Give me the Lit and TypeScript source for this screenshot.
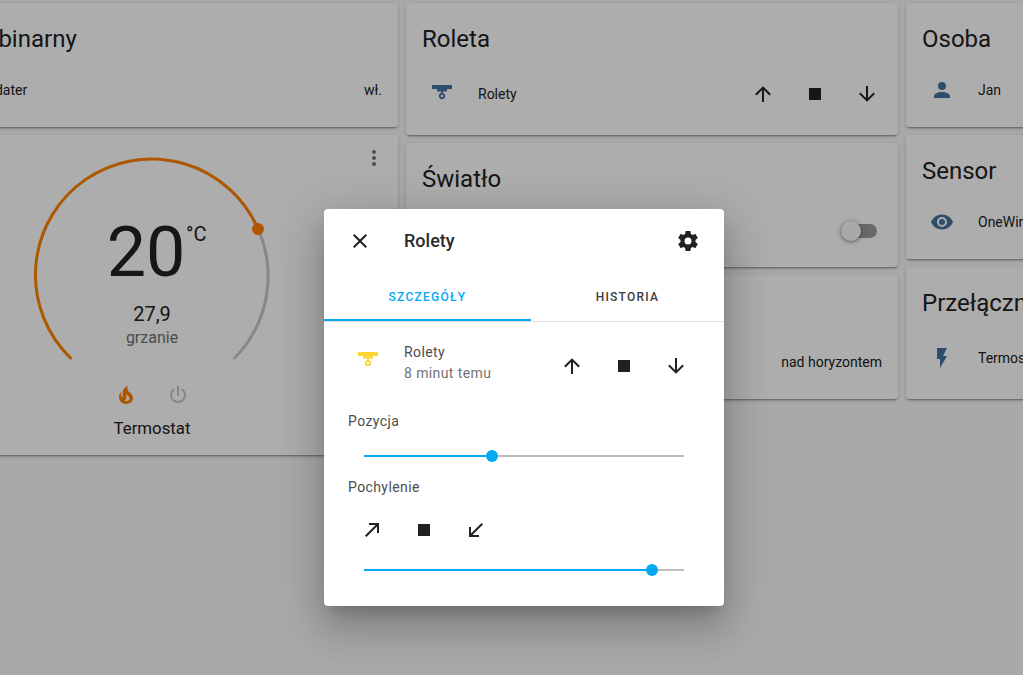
import { LitElement, html, css, svg } from 'lit';
import { customElement } from 'lit/decorators.js';

const ICONS = {
  up: 'M13,20H11V8L5.5,13.5L4.08,12.08L12,4.16L19.92,12.08L18.5,13.5L13,8V20Z',
  down: 'M11,4H13V16L18.5,10.5L19.92,11.92L12,19.84L4.08,11.92L5.5,10.5L11,16V4Z',
  stop: 'M18,18H6V6H18V18Z',
  tiltOpen: 'M5,17.59L15.59,7H9V5H19V15H17V8.41L6.41,19L5,17.59Z',
  tiltClose: 'M19,6.41L17.59,5L7,15.59V9H5V19H15V17H8.41L19,6.41Z',
  close: 'M19,6.41L17.59,5L12,10.59L6.41,5L5,6.41L10.59,12L5,17.59L6.41,19L12,13.41L17.59,19L19,17.59L13.41,12L19,6.41Z',
  cog: 'M12,15.5A3.5,3.5 0 0,1 8.5,12A3.5,3.5 0 0,1 12,8.5A3.5,3.5 0 0,1 15.5,12A3.5,3.5 0 0,1 12,15.5M19.43,12.97C19.47,12.65 19.5,12.33 19.5,12C19.5,11.67 19.47,11.34 19.43,11L21.54,9.37C21.73,9.22 21.78,8.95 21.66,8.73L19.66,5.27C19.54,5.05 19.27,4.96 19.05,5.05L16.56,6.05C16.04,5.66 15.5,5.32 14.87,5.07L14.5,2.42C14.46,2.18 14.25,2 14,2H10C9.75,2 9.54,2.18 9.5,2.42L9.13,5.07C8.5,5.32 7.96,5.66 7.44,6.05L4.95,5.05C4.73,4.96 4.46,5.05 4.34,5.27L2.34,8.73C2.21,8.95 2.27,9.22 2.46,9.37L4.57,11C4.53,11.34 4.5,11.67 4.5,12C4.5,12.33 4.53,12.65 4.57,12.97L2.46,14.63C2.27,14.78 2.21,15.05 2.34,15.27L4.34,18.73C4.46,18.95 4.73,19.03 4.95,18.95L7.44,17.94C7.96,18.34 8.5,18.68 9.13,18.93L9.5,21.58C9.54,21.82 9.75,22 10,22H14C14.25,22 14.46,21.82 14.5,21.58L14.87,18.93C15.5,18.67 16.04,18.34 16.56,17.94L19.05,18.95C19.27,19.03 19.54,18.95 19.66,18.73L21.66,15.27C21.78,15.05 21.73,14.78 21.54,14.63L19.43,12.97Z',
  account: 'M12,4A4,4 0 0,1 16,8A4,4 0 0,1 12,12A4,4 0 0,1 8,8A4,4 0 0,1 12,4M12,14C16.42,14 20,15.79 20,18V20H4V18C4,15.79 7.58,14 12,14Z',
  eye: 'M12,9A3,3 0 0,0 9,12A3,3 0 0,0 12,15A3,3 0 0,0 15,12A3,3 0 0,0 12,9M12,17A5,5 0 0,1 7,12A5,5 0 0,1 12,7A5,5 0 0,1 17,12A5,5 0 0,1 12,17M12,4.5C7,4.5 2.73,7.61 1,12C2.73,16.39 7,19.5 12,19.5C17,19.5 21.27,16.39 23,12C21.27,7.61 17,4.5 12,4.5Z',
  flash: 'M7,2V13H10V22L17,10H13L17,2H7Z',
  power: 'M16.56,5.44L15.11,6.89C16.84,7.94 18,9.83 18,12A6,6 0 0,1 12,18A6,6 0 0,1 6,12C6,9.83 7.16,7.94 8.88,6.88L7.44,5.44C5.36,6.88 4,9.28 4,12A8,8 0 0,0 12,20A8,8 0 0,0 20,12C20,9.28 18.64,6.88 16.56,5.44M13,3H11V13H13',
  fire: 'M17.66 11.2C17.43 10.9 17.15 10.64 16.89 10.38C16.22 9.78 15.46 9.35 14.82 8.72C13.33 7.26 13 4.85 13.95 3C13 3.23 12.17 3.75 11.46 4.32C8.87 6.4 7.85 10.07 9.07 13.22C9.11 13.32 9.15 13.42 9.15 13.55C9.15 13.77 9 13.97 8.8 14.05C8.57 14.15 8.33 14.09 8.14 13.93C8.08 13.88 8.04 13.83 8 13.76C6.87 12.33 6.69 10.28 7.45 8.64C5.78 10 4.87 12.3 5 14.47C5.06 14.97 5.12 15.47 5.29 15.97C5.43 16.57 5.7 17.17 6 17.7C7.08 19.43 8.95 20.67 10.96 20.92C13.1 21.19 15.39 20.8 17.03 19.32C18.86 17.66 19.5 15 18.56 12.72L18.43 12.46C18.28 12.13 17.66 11.2 17.66 11.2M14.5 17.5C14.22 17.74 13.76 18 13.4 18.1C12.28 18.5 11.16 17.94 10.5 17.28C11.69 17 12.4 16.12 12.61 15.23C12.78 14.43 12.46 13.77 12.33 13C12.21 12.26 12.23 11.63 12.5 10.94C12.69 11.32 12.89 11.7 13.13 12C13.9 13 15.11 13.44 15.37 14.8C15.41 14.94 15.43 15.08 15.43 15.23C15.46 16.05 15.1 16.95 14.5 17.5H14.5Z',
  dots: 'M12,16A2,2 0 0,1 14,18A2,2 0 0,1 12,20A2,2 0 0,1 10,18A2,2 0 0,1 12,16M12,10A2,2 0 0,1 14,12A2,2 0 0,1 12,14A2,2 0 0,1 10,12A2,2 0 0,1 12,10M12,4A2,2 0 0,1 14,6A2,2 0 0,1 12,8A2,2 0 0,1 10,6A2,2 0 0,1 12,4Z',
  blind: 'M2,3H22V7H17V9.5H13V11A3.2,3.2 0 1,1 11,11V9.5H7V7H2ZM12,12.7A1.3,1.3 0 1,0 12,15.3A1.3,1.3 0 1,0 12,12.7Z',
};

type IconName = keyof typeof ICONS;

const icon = (name: IconName) => html`<svg class="icon" viewBox="0 0 24 24">${svg`<path fill-rule="evenodd" d=${ICONS[name]}></path>`}</svg>`;

@customElement('app-root')
export class AppRoot extends LitElement {
  static styles = css`
    :host {
      display: block;
      position: relative;
      width: 1023px;
      height: 675px;
      overflow: hidden;
      background: #fafafa;
      font-family: Roboto, sans-serif;
      color: #212121;
    }

    .icon {
      display: block;
      width: 24px;
      height: 24px;
      fill: currentColor;
    }

    .columns {
      display: flex;
      gap: 8px;
      padding-top: 3px;
      margin-left: -94px;
    }

    .column {
      flex: 0 0 492px;
      display: flex;
      flex-direction: column;
      gap: 8px;
    }

    .card {
      box-sizing: border-box;
      background: #fff;
      border-radius: 4px;
      box-shadow: 0 2px 2px 0 rgba(0, 0, 0, 0.14), 0 1px 5px 0 rgba(0, 0, 0, 0.12), 0 3px 1px -2px rgba(0, 0, 0, 0.2);
      padding: 20px 16px 0;
    }

    .h124 { height: 124px; }
    .h132 { height: 132px; }

    .card-title {
      font-size: 24px;
      line-height: 32px;
      white-space: nowrap;
    }

    .card-title.binary { margin-left: -4px; }

    .row {
      display: flex;
      align-items: center;
      font-size: 14px;
      height: 40px;
      margin-top: 15px;
    }

    .h132 .row { margin-top: 19px; }

    .row .state-icon {
      flex: 0 0 40px;
      display: flex;
      justify-content: center;
      color: #44739e;
    }

    .row .name {
      flex: 1;
      margin-left: 16px;
      white-space: nowrap;
    }

    .controls {
      display: flex;
      gap: 28px;
      color: #212121;
    }

    .row .controls { margin-right: 3px; }

    .tall {
      height: 320px;
      position: relative;
      padding: 0;
    }

    .menu {
      position: absolute;
      top: 11px;
      right: 12px;
      color: #727272;
    }

    .dial {
      display: block;
      position: absolute;
      left: 0;
      top: 0;
    }

    .setpoint {
      position: absolute;
      left: 240px;
      top: 81px;
      width: 0;
      font-size: 70px;
      line-height: 72px;
      display: flex;
      justify-content: center;
      white-space: nowrap;
    }

    .unit {
      position: absolute;
      left: 40px;
      top: 6px;
      font-size: 20px;
      line-height: 24px;
    }

    .current {
      position: absolute;
      left: 246px;
      top: 167px;
      width: 0;
      display: flex;
      flex-direction: column;
      align-items: center;
      font-size: 20px;
      line-height: 24px;
      white-space: nowrap;
    }

    .mode {
      font-size: 16px;
      line-height: 20px;
      margin-top: 2px;
      color: #727272;
    }

    .modes {
      position: absolute;
      left: 208px;
      top: 248px;
      display: flex;
      gap: 28px;
      color: #c8c8c8;
    }

    .modes .on { color: #ff8100; }

    .climate-name {
      position: absolute;
      left: 146px;
      width: 200px;
      top: 281px;
      font-size: 16.8px;
      line-height: 24px;
      text-align: center;
    }

    .toggle {
      position: relative;
      width: 36px;
      height: 14px;
      margin-right: 5px;
      margin-top: 2px;
      border-radius: 7px;
      background: #9b9b9b;
    }

    .toggle::after {
      content: '';
      position: absolute;
      left: 0;
      top: -3px;
      width: 20px;
      height: 20px;
      border-radius: 50%;
      background: #fafafa;
      box-shadow: 0 1px 4px rgba(0, 0, 0, 0.5);
    }

    .overlay {
      position: absolute;
      inset: 0;
      background: rgba(0, 0, 0, 0.32);
    }

    .dialog {
      position: absolute;
      left: 324px;
      top: 209px;
      width: 400px;
      height: 397px;
      background: #fff;
      border-radius: 4px;
      box-shadow: 0 11px 15px -7px rgba(0, 0, 0, 0.2), 0 24px 38px 3px rgba(0, 0, 0, 0.14), 0 9px 46px 8px rgba(0, 0, 0, 0.12);
    }

    .dialog-head {
      display: flex;
      align-items: center;
      height: 64px;
      padding: 0 24px;
      color: #212121;
    }

    .dialog-title {
      flex: 1;
      margin: 0 0 2px 32px;
      font-size: 18px;
      font-weight: 500;
      color: #2b2b2b;
    }

    .tabs {
      display: flex;
      height: 48px;
      border-bottom: 1px solid #e0e0e0;
    }

    .tab {
      display: flex;
      align-items: center;
      justify-content: center;
      font-size: 12px;
      font-weight: 500;
      letter-spacing: 1.25px;
      color: #3c3c3c;
    }

    .tab.active {
      flex: 0 0 207px;
      color: #03a9f4;
      box-shadow: inset 0 -2px 0 #03a9f4;
    }

    .tab.rest { flex: 1; }

    .entity {
      display: flex;
      align-items: flex-start;
      padding: 20px 24px 0;
    }

    .entity-icon {
      color: #fdd835;
      margin: 7px 24px 0 8px;
      flex: 0 0 24px;
    }

    .entity-text {
      flex: 1;
      font-size: 14px;
      line-height: 20px;
      letter-spacing: 0.4px;
      color: #4d4d4d;
    }

    .entity-text small {
      display: block;
      font-size: 14px;
      line-height: 22px;
      color: #727272;
    }

    .entity .controls {
      margin-top: 12px;
      margin-right: 12px;
    }

    .label {
      font-size: 14px;
      line-height: 20px;
      letter-spacing: 0.4px;
      color: #4d4d4d;
      padding: 0 24px;
    }

    .label.first { margin-top: 27px; }
    .label.second { margin-top: 20px; }

    .slider {
      position: relative;
      height: 2px;
      margin: 0 40px;
      background: #bdbdbd;
    }

    .slider.first { margin-top: 24px; }
    .slider.second { margin-top: 27px; }

    .fill {
      height: 2px;
      background: #03a9f4;
    }

    .thumb {
      position: absolute;
      top: -5px;
      width: 12px;
      height: 12px;
      margin-left: -6px;
      border-radius: 50%;
      background: #03a9f4;
    }

    .tilt {
      display: flex;
      gap: 28px;
      padding: 21px 36px 0;
      color: #212121;
    }
  `;

  private slider(pos: number, cls: string) {
    return html`<div class="slider ${cls}">
      <div class="fill" style="width:${pos}%"></div>
      <div class="thumb" style="left:${pos}%"></div>
    </div>`;
  }

  private cover() {
    return html`<div class="controls">${icon('up')}${icon('stop')}${icon('down')}</div>`;
  }

  render() {
    return html`
      <div class="columns">
        <div class="column">
          <div class="card h124">
            <div class="card-title binary">Sensor binarny</div>
            <div class="row">
              <div class="state-icon"></div>
              <div class="name">Updater</div>
              <div>wł.</div>
            </div>
          </div>
          <div class="card tall">
            <svg class="dial" width="492" height="320" viewBox="0 0 492 320" fill="none">
              <path d="M164.5 223A116 116 0 1 1 352 94" stroke="#ff8100" stroke-width="3" stroke-linecap="round"></path>
              <path d="M352 94A116 116 0 0 1 328.5 223" stroke="#c8c8c8" stroke-width="3" stroke-linecap="round"></path>
              <circle cx="352" cy="94" r="6" fill="#ff8100"></circle>
            </svg>
            <div class="setpoint">20<span class="unit">°C</span></div>
            <div class="current">27,9<span class="mode">grzanie</span></div>
            <div class="modes">
              <span class="on">${icon('fire')}</span>
              <span>${icon('power')}</span>
            </div>
            <div class="climate-name">Termostat</div>
            <div class="menu">${icon('dots')}</div>
          </div>
        </div>

        <div class="column">
          <div class="card h132">
            <div class="card-title">Roleta</div>
            <div class="row">
              <div class="state-icon">${icon('blind')}</div>
              <div class="name">Rolety</div>
              ${this.cover()}
            </div>
          </div>
          <div class="card h124">
            <div class="card-title">Światło</div>
            <div class="row">
              <div class="state-icon"></div>
              <div class="name"></div>
              <div class="toggle"></div>
            </div>
          </div>
          <div class="card h124">
            <div class="card-title">Słońce</div>
            <div class="row">
              <div class="state-icon"></div>
              <div class="name"></div>
              <div>nad horyzontem</div>
            </div>
          </div>
        </div>

        <div class="column">
          <div class="card h124">
            <div class="card-title">Osoba</div>
            <div class="row">
              <div class="state-icon">${icon('account')}</div>
              <div class="name">Jan</div>
            </div>
          </div>
          <div class="card h124">
            <div class="card-title">Sensor</div>
            <div class="row">
              <div class="state-icon">${icon('eye')}</div>
              <div class="name">OneWire</div>
            </div>
          </div>
          <div class="card h132">
            <div class="card-title">Przełącznik</div>
            <div class="row">
              <div class="state-icon">${icon('flash')}</div>
              <div class="name">Termostat</div>
            </div>
          </div>
        </div>
      </div>

      <div class="overlay"></div>

      <div class="dialog">
        <div class="dialog-head">
          ${icon('close')}
          <div class="dialog-title">Rolety</div>
          ${icon('cog')}
        </div>
        <div class="tabs">
          <div class="tab active">SZCZEGÓŁY</div>
          <div class="tab rest">HISTORIA</div>
        </div>
        <div class="entity">
          <div class="entity-icon">${icon('blind')}</div>
          <div class="entity-text">Rolety<small>8 minut temu</small></div>
          ${this.cover()}
        </div>
        <div class="label first">Pozycja</div>
        ${this.slider(40, 'first')}
        <div class="label second">Pochylenie</div>
        <div class="tilt">${icon('tiltOpen')}${icon('stop')}${icon('tiltClose')}</div>
        ${this.slider(90, 'second')}
      </div>
    `;
  }
}
